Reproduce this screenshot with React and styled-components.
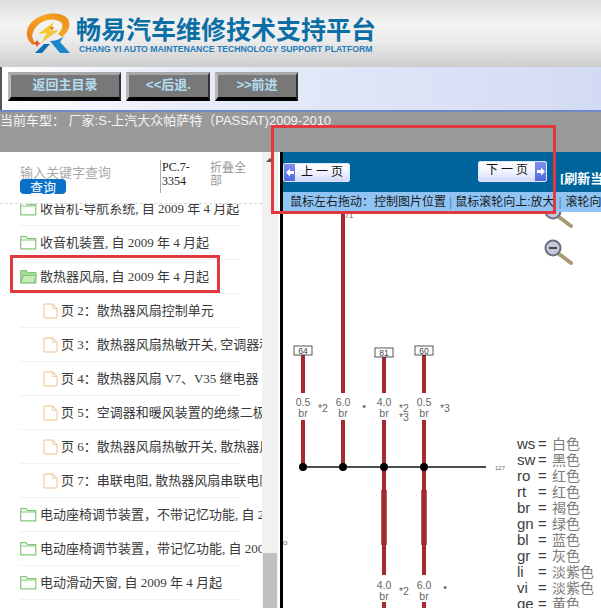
import React from "react";
import styled, { createGlobalStyle } from "styled-components";

const Global = createGlobalStyle`
  html, body { margin: 0; padding: 0; background: #fff; }
  * { box-sizing: border-box; }
`;

const CJK = `"Noto Sans CJK SC", sans-serif`;

const Page = styled.div`
  position: relative;
  width: 601px;
  height: 608px;
  overflow: hidden;
  display: flex;
  flex-direction: column;
  font-family: "Liberation Sans", ${CJK};
`;

const Header = styled.header`
  flex: 0 0 67px;
  display: flex;
  align-items: flex-start;
  padding: 11px 0 0 24px;
  background: linear-gradient(180deg, #dddddd 0%, #f3f3f3 35%, #ececec 60%, #cdcdcd 100%);
`;

const Brand = styled.div`
  display: flex;
  flex-direction: column;
  margin-left: 2px;
`;

const BrandTitle = styled.div`
  font: 700 25px/30px ${CJK};
  color: #0b6fa6;
  white-space: nowrap;
  margin-top: 2px;
`;

const BrandSub = styled.div`
  font: 700 8.7px/11px "Liberation Sans", sans-serif;
  color: #1f7cb9;
  white-space: nowrap;
  margin: 1px 0 0 3px;
`;

const Toolbar = styled.nav`
  flex: 0 0 45px;
  display: flex;
  align-items: flex-start;
  gap: 5px;
  padding: 5px 0 0 8px;
  background: linear-gradient(90deg, #ffffff 0%, #e9edfa 30%, #d3dbf4 100%);
  border-bottom: 2px solid #6f88c6;
  box-shadow: inset 2px 0 0 #555;
`;

const ToolButton = styled.button`
  width: ${(p) => p.$w}px;
  height: 29px;
  margin: 0;
  padding: 0 0 3px;
  background: #787878;
  border-style: solid;
  border-width: 3px 2px 4px 3px;
  border-color: #a8a8a8 #333 #000 #b8b8b8;
  color: #b4dcf2;
  font: 700 13px/18px "Liberation Sans", ${CJK};
`;

const CarBar = styled.div`
  flex: 0 0 40px;
  background: #999999;
  color: #f4f4f4;
  font: 400 13px/17px "Liberation Sans", ${CJK};
  white-space: nowrap;
`;

const Body = styled.div`
  flex: 1;
  min-height: 0;
  display: flex;
`;

const Sidebar = styled.aside`
  flex: 0 0 262px;
  display: flex;
  flex-direction: column;
  overflow: hidden;
  background: #fff;
`;

const SearchArea = styled.div`
  flex: 0 0 52px;
  display: flex;
  padding-top: 8px;
  border-bottom: 1px dashed #d8d8d8;
`;

const SearchColumn = styled.div`
  flex: 0 0 160px;
  padding: 4px 0 0 20px;
`;

const Placeholder = styled.div`
  font: 400 13px/15px ${CJK};
  color: #aaaaaa;
`;

const SearchButton = styled.button`
  display: block;
  width: 46px;
  height: 15px;
  margin: 0;
  padding: 0;
  border: 0;
  border-radius: 4px;
  background: #0a70c8;
  color: #fff;
  font: 400 13px/15px ${CJK};
`;

const CodeCell = styled.div`
  flex: 0 0 50px;
  height: 33px;
  padding-left: 1px;
  border-left: 1px solid #aaa;
  font: 400 12px/14px "Liberation Serif", serif;
  color: #222;
`;

const FoldCell = styled.div`
  width: 38px;
  font: 400 12px/13px ${CJK};
  color: #999;
`;

const Tree = styled.div`
  flex: 1;
  min-height: 0;
  overflow: hidden;
`;

const TreeList = styled.ul`
  list-style: none;
  margin: -12px 0 0;
  padding: 0;
`;

const Row = styled.li`
  width: 220px;
  height: 34px;
  margin-left: 20px;
  padding-left: ${(p) => (p.$child ? 23 : 0)}px;
  display: flex;
  align-items: center;
  gap: 3px;
  border-bottom: 1px solid #f1f1f1;
  white-space: nowrap;
  font: 400 13px/20px "Liberation Serif", ${CJK};
  color: #3a3a3a;
`;

const Track = styled.div`
  flex: 0 0 18px;
  display: flex;
  flex-direction: column;
  padding-right: 2px;
  background: linear-gradient(90deg, #f1f1f1 0 16px, #fff 16px);
`;

const UpArrow = styled.div`
  width: 0;
  height: 0;
  margin: 6px 0 0 4px;
  border-left: 4px solid transparent;
  border-right: 4px solid transparent;
  border-bottom: 4px solid #555;
`;

const Thumb = styled.div`
  height: 55px;
  margin: auto 1px 0;
  background: #c1c1c1;
`;

const Main = styled.main`
  flex: 1;
  min-width: 0;
  display: flex;
  flex-direction: column;
  border-left: 3px solid #000;
`;

const NavBar = styled.div`
  flex: 0 0 40px;
  display: flex;
  align-items: flex-start;
  overflow: hidden;
  background: #00649c;
  white-space: nowrap;
`;

const PageButton = styled.button`
  flex: 0 0 auto;
  display: flex;
  flex-direction: ${(p) => (p.$next ? "row-reverse" : "row")};
  align-items: stretch;
  width: ${(p) => (p.$next ? 69 : 67)}px;
  height: ${(p) => (p.$next ? 21 : 19)}px;
  margin: ${(p) => (p.$next ? "9px 0 0 128px" : "11px 0 0 0")};
  padding: 0;
  border: 1px solid #dfe4ff;
  border-radius: 2px;
  background: linear-gradient(180deg, #ffffff 0%, #f2f3ff 50%, #d5d9f8 100%);
  overflow: hidden;
`;

const ArrowCap = styled.span`
  flex: 0 0 11px;
  display: flex;
  align-items: center;
  justify-content: center;
  background: linear-gradient(180deg, #7f92ee, #5168dc);
`;

const PageLabel = styled.span`
  flex: 1;
  text-align: center;
  font: 400 12px/17px "Liberation Serif", ${CJK};
  color: #111;
`;

const Refresh = styled.div`
  margin: 18px 0 0 13px;
  font: 700 13px/17px "Liberation Serif", ${CJK};
  color: #fff;
`;

const HintBar = styled.div`
  flex: 0 0 20px;
  display: flex;
  overflow: hidden;
  padding-left: 7px;
  background: #8fc4f4;
  font: 400 12px/20px "Liberation Sans", ${CJK};
  color: #1a1a1a;
  white-space: nowrap;
`;

const HintSep = styled.span`
  margin: 0 ${(p) => p.$gap}px;
  color: #4d86bb;
`;

const Drawing = styled.div`
  flex: 1;
  min-height: 0;
  background: #fff;
  overflow: hidden;
  svg { display: block; }
`;

const Callout = styled.div`
  position: absolute;
  left: ${(p) => p.$x}px;
  top: ${(p) => p.$y}px;
  width: ${(p) => p.$w}px;
  height: ${(p) => p.$h}px;
  border: 3px solid #e2383f;
  pointer-events: none;
`;

const Logo = () => (
  <svg width="50" height="46" viewBox="24 11 50 46">
    <defs>
      <linearGradient id="ring" x1="0" y1="1" x2="1" y2="0">
        <stop offset="0" stopColor="#e8791a" />
        <stop offset="0.6" stopColor="#f5a623" />
        <stop offset="1" stopColor="#e8871c" />
      </linearGradient>
    </defs>
    <path
      d="M33 45 C24 38 25 27 34 20 C43 13 58 11 66 17 C72 22 70 31 62 37 L58 34 C63 29 64 23 59 21 C51 17 41 21 36 27 C31 33 31 39 36 43 Z"
      fill="url(#ring)"
    />
    <path d="M54 22 L38 34 L47 33 L41 43 L59 30 L50 31 Z" fill="#f7c531" />
    <path d="M50 27 L54 27 L52 31 Z" fill="#e8791a" />
    <path d="M37 40 L38.5 42.5 L41 43.5 L38.5 44.5 L37 47 L35.5 44.5 L33 43.5 L35.5 42.5 Z" fill="#e2552a" />
    <path d="M44 44 L50 44 L42 53 L35 53 Z" fill="#0f6db5" />
    <path d="M50 41 C57 41 62 38 64 36 L60 42 L70 53 L60 53 Z" fill="#1b86cc" />
  </svg>
);

const FolderIcon = ({ open }) => (
  <svg width="17" height="15" viewBox="0 0 17 15" style={{ flex: "0 0 auto" }}>
    <path
      d="M0.7 13.8 V1.6 H6 L7.6 3.6 H15.8 V13.8 Z"
      fill={open ? "#a9dc9c" : "#fff"}
      stroke="#82c77a"
      strokeWidth="1.2"
      strokeLinejoin="round"
    />
    {open ? (
      <path d="M0.7 13.8 L3.4 6.5 H16.4 L14 13.8 Z" fill="#c4eab8" stroke="#82c77a" strokeWidth="1.1" strokeLinejoin="round" />
    ) : (
      <path d="M0.7 5 H15.8" stroke="#82c77a" strokeWidth="1" />
    )}
  </svg>
);

const FileIcon = () => (
  <svg width="15" height="16" viewBox="0 0 15 16" style={{ flex: "0 0 auto" }}>
    <path
      d="M1 2.2 Q1 1 2.2 1 H9.5 L14 5.5 V13.8 Q14 15 12.8 15 H2.2 Q1 15 1 13.8 Z"
      fill="#fff"
      stroke="#f3d3ab"
      strokeWidth="1.3"
    />
    <path d="M9.5 1 V5.5 H14" fill="none" stroke="#f3d3ab" strokeWidth="1.1" />
  </svg>
);

const rows = [
  { t: "收音机-导航系统, 自 2009 年 4 月起" },
  { t: "收音机装置, 自 2009 年 4 月起" },
  { t: "散热器风扇, 自 2009 年 4 月起", open: true },
  { t: "页 2：散热器风扇控制单元", child: true },
  { t: "页 3：散热器风扇热敏开关, 空调器和暖风装置", child: true },
  { t: "页 4：散热器风扇 V7、V35 继电器", child: true },
  { t: "页 5：空调器和暖风装置的绝缘二极管", child: true },
  { t: "页 6：散热器风扇热敏开关, 散热器风扇", child: true },
  { t: "页 7：串联电阻, 散热器风扇串联电阻", child: true },
  { t: "电动座椅调节装置，不带记忆功能, 自 2009 年 4 月起" },
  { t: "电动座椅调节装置，带记忆功能, 自 2009 年 4 月起" },
  { t: "电动滑动天窗, 自 2009 年 4 月起" },
  { t: "" },
];

const legend = [
  ["ws", "白色"],
  ["sw", "黑色"],
  ["ro", "红色"],
  ["rt", "红色"],
  ["br", "褐色"],
  ["gn", "绿色"],
  ["bl", "蓝色"],
  ["gr", "灰色"],
  ["li", "淡紫色"],
  ["vi", "淡紫色"],
  ["ge", "黄色"],
];

const WIRE = "#a52a30";

const Label = ({ x, y, size = 10.5, children, anchor = "middle", fill = "#666" }) => (
  <text x={x} y={y} fontSize={size} textAnchor={anchor} fill={fill} fontFamily="Liberation Sans, sans-serif">
    {children}
  </text>
);

const Tag = ({ x, y, n }) => (
  <g>
    <rect x={x} y={y} width="18" height="9" fill="#fff" stroke="#444" strokeWidth="0.9" />
    <Label x={x + 9} y={y + 8} size={8.5} fill="#444">{n}</Label>
  </g>
);

const Magnifier = ({ cy }) => (
  <g>
    <line x1={559} y1={cy + 6} x2={571} y2={cy + 15} stroke="#a89a72" strokeWidth="4" strokeLinecap="round" />
    <circle cx={553} cy={cy} r={7.5} fill="#c5c8da" stroke="#6d6f7d" strokeWidth="2" />
    <line x1={549} y1={cy} x2={557} y2={cy} stroke="#444" strokeWidth="2" />
  </g>
);

const Diagram = () => (
  <svg width="318" height="396" viewBox="283 212 318 396">
    <g stroke={WIRE} strokeWidth="4" fill="none">
      <path d="M303 355 V393 M303 420 V467" />
      <path d="M343 212 V393 M343 420 V467" />
      <path d="M384 357 V393 M384 420 V467" />
      <path d="M424 355 V393 M424 420 V467" />
      <path d="M384 467 V575 M424 467 V575 M384 602 V608 M424 602 V608" />
      <path d="M384 490 V545 M424 490 V545" strokeWidth="5.5" />
    </g>
    <line x1="300" y1="467" x2="486" y2="467" stroke="#111" strokeWidth="1.3" />
    {[303, 343, 384, 424].map((x) => (
      <circle key={x} cx={x} cy={467} r={4} fill="#000" />
    ))}
    <Tag x={294} y={346} n="64" />
    <Tag x={375} y={348} n="81" />
    <Tag x={415} y={346} n="60" />
    <Label x={303} y={406}>0.5</Label>
    <Label x={303} y={417}>br</Label>
    <Label x={343} y={406}>6.0</Label>
    <Label x={343} y={417}>br</Label>
    <Label x={384} y={406}>4.0</Label>
    <Label x={384} y={417}>br</Label>
    <Label x={424} y={406}>0.5</Label>
    <Label x={424} y={417}>br</Label>
    <Label x={384} y={589}>4.0</Label>
    <Label x={384} y={600}>br</Label>
    <Label x={424} y={589}>6.0</Label>
    <Label x={424} y={600}>br</Label>
    <Label x={323} y={412}>*2</Label>
    <Label x={364} y={410}>•</Label>
    <Label x={404} y={412}>*2</Label>
    <Label x={404} y={421}>*3</Label>
    <Label x={445} y={412}>*3</Label>
    <Label x={404} y={595}>*2</Label>
    <Label x={445} y={591}>•</Label>
    <Label x={349} y={218} size={8}>71</Label>
    <Label x={283} y={545} size={8} anchor="start">o</Label>
    <Label x={495} y={470} size={6} anchor="start">127</Label>
    <Magnifier cy={211} />
    <Magnifier cy={248} />
    {legend.map(([k, v], i) => (
      <g key={k}>
        <text x={517} y={449 + i * 16} fontSize="15" fill="#3c3c3c" fontFamily="Liberation Sans, sans-serif">{k}</text>
        <text x={538} y={449 + i * 16} fontSize="15" fill="#3c3c3c" fontFamily="Liberation Sans, sans-serif">=</text>
        <text x={552} y={449 + i * 16} fontSize="14" fill="#7a7a7a" fontFamily="Noto Sans CJK SC, sans-serif">{v}</text>
      </g>
    ))}
  </svg>
);

export default function App() {
  return (
    <Page>
      <Global />
      <Header>
        <Logo />
        <Brand>
          <BrandTitle>畅易汽车维修技术支持平台</BrandTitle>
          <BrandSub>CHANG YI AUTO MAINTENANCE TECHNOLOGY SUPPORT PLATFORM</BrandSub>
        </Brand>
      </Header>
      <Toolbar>
        <ToolButton $w={113}>返回主目录</ToolButton>
        <ToolButton $w={84}>&lt;&lt;后退.</ToolButton>
        <ToolButton $w={83}>&gt;&gt;前进</ToolButton>
      </Toolbar>
      <CarBar>当前车型： 厂家:S-上汽大众帕萨特（PASSAT)2009-2010</CarBar>
      <Body>
        <Sidebar>
          <SearchArea>
            <SearchColumn>
              <Placeholder>输入关键字查询</Placeholder>
              <SearchButton>查询</SearchButton>
            </SearchColumn>
            <CodeCell>PC.7-<br />3354</CodeCell>
            <FoldCell>折叠全部</FoldCell>
          </SearchArea>
          <Tree>
            <TreeList>
              {rows.map((r, i) => (
                <Row key={i} $child={r.child}>
                  {r.t && (r.child ? <FileIcon /> : <FolderIcon open={r.open} />)}
                  {r.t}
                </Row>
              ))}
            </TreeList>
          </Tree>
        </Sidebar>
        <Track>
          <UpArrow />
          <Thumb />
        </Track>
        <Main>
          <NavBar>
            <PageButton>
              <ArrowCap>
                <svg width="8" height="9" viewBox="0 0 8 9"><path d="M0 4.5 L4 0.5 V3 H8 V6 H4 V8.5 Z" fill="#fff" /></svg>
              </ArrowCap>
              <PageLabel>上 一 页</PageLabel>
            </PageButton>
            <PageButton $next>
              <ArrowCap>
                <svg width="8" height="9" viewBox="0 0 8 9"><path d="M8 4.5 L4 0.5 V3 H0 V6 H4 V8.5 Z" fill="#fff" /></svg>
              </ArrowCap>
              <PageLabel>下 一 页</PageLabel>
            </PageButton>
            <Refresh>[刷新当前页]</Refresh>
          </NavBar>
          <HintBar>
            <span>鼠标左右拖动：控制图片位置</span>
            <HintSep $gap={3}>|</HintSep>
            <span>鼠标滚轮向上:放大</span>
            <HintSep $gap={4}>|</HintSep>
            <span>滚轮向下:缩小</span>
          </HintBar>
          <Drawing>
            <Diagram />
          </Drawing>
        </Main>
      </Body>
      <Callout $x={10} $y={255} $w={210} $h={38} />
      <Callout $x={271} $y={125} $w={285} $h={89} />
    </Page>
  );
}
